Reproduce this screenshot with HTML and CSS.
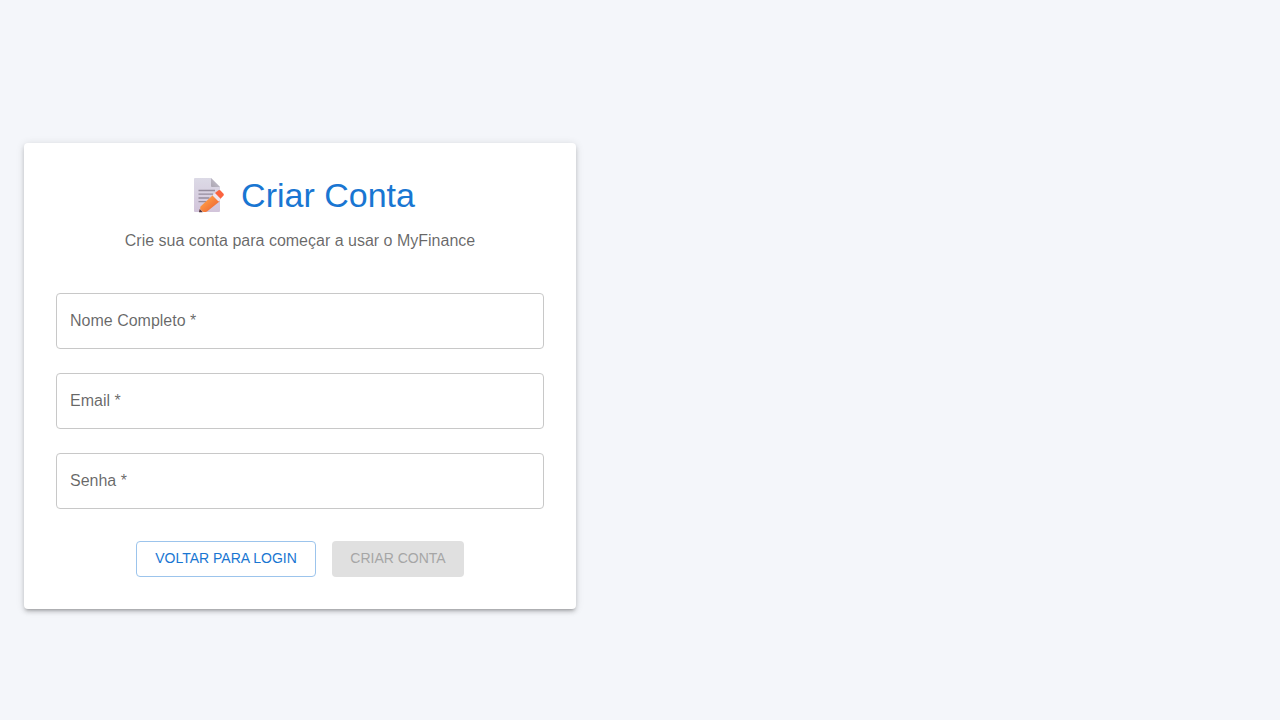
FILE: index.html
```html
<!DOCTYPE html>
<html lang="pt-BR">
<head>
  <meta charset="utf-8">
  <meta name="viewport" content="width=device-width, initial-scale=1">
  <title>Criar Conta - MyFinance</title>
  <link rel="stylesheet" href="styles.css">
</head>
<body>
  <main class="page">
    <section class="card">
      <header class="card-header">
        <h1 class="title">
          <svg class="title-icon" viewBox="0 0 32 36" aria-hidden="true">
            <defs>
              <linearGradient id="paper" x1="0" y1="0" x2="0" y2="1">
                <stop offset="0" stop-color="#dcdae6"/>
                <stop offset="1" stop-color="#d2c4da"/>
              </linearGradient>
              <linearGradient id="fold" x1="0" y1="1" x2="1" y2="0">
                <stop offset="0" stop-color="#aca6b3"/>
                <stop offset="1" stop-color="#c9c7d0"/>
              </linearGradient>
              <linearGradient id="pencil" x1="0" y1="0" x2="1" y2="1">
                <stop offset="0.2" stop-color="#ffa047"/>
                <stop offset="0.8" stop-color="#f06a34"/>
              </linearGradient>
            </defs>
            <path d="M2 1h16l9 9v24q0 1-1 1H2q-1 0-1-1V2q0-1 1-1z" fill="url(#paper)"/>
            <path d="M18 1l9 9h-8q-1 0-1-1z" fill="url(#fold)"/>
            <path d="M5.500 13.500h16.500M5.500 17.200h14.500M5.500 21h11M5.500 24.700h8" fill="none" stroke="#958c9d" stroke-width="1.3"/>
            <path d="M6 35l1.500-5.500 5 5.500z" fill="#e8a88c"/>
            <path d="M6 35.200l.7-3.200 3 3.200z" fill="#493444"/>
            <path d="M7.500 29.500L20 18l6.500 6.500L14 34.500q-1.500.7-3.500.5l-3-3z" fill="url(#pencil)"/>
            <path d="M19.500 18.500l2.700-2.700 6 6-2.700 2.700z" fill="#eee5f0"/>
            <path d="M22 16l3.500-2.800q1-.7 2 .2l3 3.300q.8 1 0 1.900l-2.900 3.200z" fill="#fb633f"/>
          </svg>
          <span>Criar Conta</span>
        </h1>
        <p class="subtitle">Crie sua conta para começar a usar o MyFinance</p>
      </header>
      <form class="form">
        <div class="field">
          <input class="field-input" id="name" type="text" placeholder=" " autocomplete="name" required>
          <label class="field-label" for="name">Nome Completo *</label>
        </div>
        <div class="field">
          <input class="field-input" id="email" type="email" placeholder=" " autocomplete="email" required>
          <label class="field-label" for="email">Email *</label>
        </div>
        <div class="field">
          <input class="field-input" id="password" type="password" placeholder=" " autocomplete="new-password" required>
          <label class="field-label" for="password">Senha *</label>
        </div>
        <div class="actions">
          <button class="button button-outlined" type="button">Voltar para Login</button>
          <button class="button button-contained" type="submit" disabled>Criar Conta</button>
        </div>
      </form>
    </section>
  </main>
</body>
</html>
```
FILE: styles.css
```css
*,
*::before,
*::after {
  box-sizing: border-box;
}

body {
  margin: 0;
  background: #f4f6fa;
  color: rgba(0, 0, 0, 0.87);
  font-family: "Liberation Sans", Arial, sans-serif;
  font-size: 16px;
  line-height: 24px;
}

.page {
  display: flex;
  flex-direction: column;
  justify-content: center;
  max-width: 600px;
  min-height: 100vh;
  padding: 32px 24px 0;
}

.card {
  padding: 32px;
  border-radius: 4px;
  background: #fff;
  box-shadow:
    0 3px 3px -2px rgba(0, 0, 0, 0.2),
    0 3px 4px 0 rgba(0, 0, 0, 0.14),
    0 1px 8px 0 rgba(0, 0, 0, 0.12);
}

.card-header {
  margin-bottom: 40px;
  text-align: center;
}

.title {
  display: flex;
  align-items: center;
  justify-content: center;
  gap: 16px;
  margin: 0 0 14px;
  padding-left: 8px;
  color: #1976d2;
  font-size: 34px;
  font-weight: 400;
  line-height: 40px;
}

.title-icon {
  width: 32px;
  height: 36px;
}

.subtitle {
  margin: 0;
  color: rgba(0, 0, 0, 0.6);
}

.form {
  display: flex;
  flex-direction: column;
  gap: 24px;
}

.field {
  position: relative;
}

.field-input {
  display: block;
  width: 100%;
  height: 56px;
  padding: 16px 14px;
  border: 1px solid #c8c8c8;
  border-radius: 4px;
  background: transparent;
  color: inherit;
  font: inherit;
}

.field-input:focus {
  border-color: #1976d2;
  outline: 1px solid #1976d2;
}

.field-label {
  position: absolute;
  top: 16px;
  left: 14px;
  color: rgba(0, 0, 0, 0.6);
  pointer-events: none;
}

.field-input:focus + .field-label,
.field-input:not(:placeholder-shown) + .field-label {
  top: -12px;
  padding: 0 4px;
  background: #fff;
  font-size: 12px;
}

.actions {
  display: flex;
  justify-content: center;
  gap: 16px;
  padding-top: 8px;
}

.button {
  height: 36px;
  padding: 0 16px 2px;
  border: 1px solid transparent;
  border-radius: 4px;
  font: inherit;
  font-size: 14px;
  text-transform: uppercase;
  cursor: pointer;
}

.button-outlined {
  min-width: 180px;
  border-color: #9cc4ec;
  background: transparent;
  color: #1976d2;
}

.button-contained {
  min-width: 132px;
  background: #1976d2;
  color: #fff;
}

.button-contained:disabled {
  background: #e0e0e0;
  color: #a6a6a6;
  cursor: default;
}
```
